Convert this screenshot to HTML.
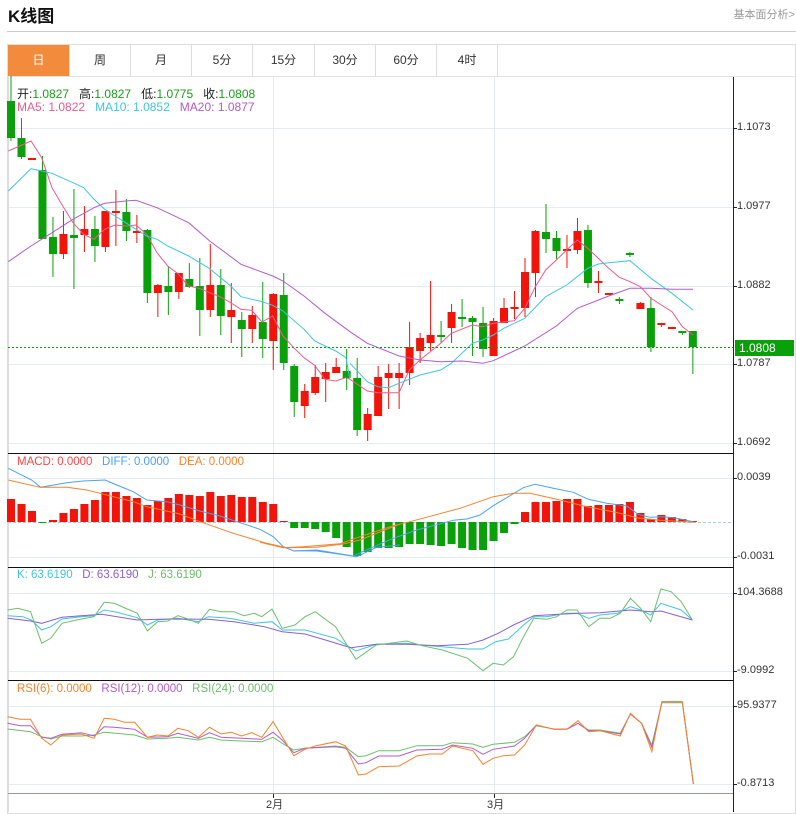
<!DOCTYPE html>
<html><head><meta charset="utf-8">
<style>
*{margin:0;padding:0;box-sizing:border-box}
body{width:796px;height:812px;background:#fff;font-family:"Liberation Sans","Noto Sans CJK SC",sans-serif;position:relative;overflow:hidden}
.t{position:absolute;white-space:nowrap}
#title{left:8px;top:2px;font-size:17px;font-weight:bold;color:#111}
#link{right:1px;top:6px;font-size:11px;color:#999}
#hr{position:absolute;left:7px;top:31px;width:789px;height:1px;background:#ccc}
#box{position:absolute;left:7px;top:44px;width:789px;height:770px;border:1px solid #ddd}
.tab{position:absolute;top:45px;height:31px;border-right:1px solid #ddd;font-size:12px;color:#333;text-align:center;line-height:31px}
#tabline{position:absolute;left:7px;top:76px;width:789px;height:1px;background:#e3e3e3}
svg{position:absolute;left:0;top:0}
.lg{font-size:12px}
</style></head><body>
<div class="t" id="title">K线图</div>
<div class="t" id="link">基本面分析&gt;</div>
<div id="hr"></div>
<div id="box"></div>
<div class="tab" style="left:8px;width:62px;background:#f28c3c;color:#fff">日</div>
<div class="tab" style="left:70px;width:61px">周</div>
<div class="tab" style="left:131px;width:61px">月</div>
<div class="tab" style="left:192px;width:61px">5分</div>
<div class="tab" style="left:253px;width:62px">15分</div>
<div class="tab" style="left:315px;width:61px">30分</div>
<div class="tab" style="left:376px;width:61px">60分</div>
<div class="tab" style="left:437px;width:61px">4时</div>
<div id="tabline"></div>
<svg id="s" width="796" height="812"></svg>
<div class="t lg" style="left:17px;top:85px;color:#222">开:<span style="color:#1a9c1a">1.0827</span>&nbsp;&nbsp; 高:<span style="color:#1a9c1a">1.0827</span>&nbsp;&nbsp; 低:<span style="color:#1a9c1a">1.0775</span>&nbsp;&nbsp; 收:<span style="color:#1a9c1a">1.0808</span></div>
<div class="t lg" style="left:17px;top:100px"><span style="color:#ee5a8c">MA5: 1.0822</span>&nbsp;&nbsp;&nbsp;<span style="color:#3fc6dd">MA10: 1.0852</span>&nbsp;&nbsp;&nbsp;<span style="color:#b25bc9">MA20: 1.0877</span></div>
<div class="t" style="left:17px;top:456px;font-size:11.5px"><span style="color:#f44">MACD: 0.0000</span>&nbsp;&nbsp;&nbsp;<span style="color:#4aa3f0">DIFF: 0.0000</span>&nbsp;&nbsp;&nbsp;<span style="color:#f6822b">DEA: 0.0000</span></div>
<div class="t" style="left:17px;top:569px;font-size:11.5px"><span style="color:#3fc6dd">K: 63.6190</span>&nbsp;&nbsp;&nbsp;<span style="color:#8a5fd0">D: 63.6190</span>&nbsp;&nbsp;&nbsp;<span style="color:#6cbf6c">J: 63.6190</span></div>
<div class="t" style="left:17px;top:683px;font-size:11.5px"><span style="color:#f6822b">RSI(6): 0.0000</span>&nbsp;&nbsp;&nbsp;<span style="color:#b25bc9">RSI(12): 0.0000</span>&nbsp;&nbsp;&nbsp;<span style="color:#6cbf6c">RSI(24): 0.0000</span></div>
<div class="t" style="left:737px;top:121px;font-size:11px;color:#333">1.1073</div>
<div class="t" style="left:737px;top:200px;font-size:11px;color:#333">1.0977</div>
<div class="t" style="left:737px;top:279px;font-size:11px;color:#333">1.0882</div>
<div class="t" style="left:737px;top:357px;font-size:11px;color:#333">1.0787</div>
<div class="t" style="left:737px;top:436px;font-size:11px;color:#333">1.0692</div>
<div class="t" style="left:735px;top:340px;width:59px;height:16px;background:#0aa00a;color:#fff;font-size:12px;line-height:16px;padding-left:4px">1.0808</div>
<div class="t" style="left:737px;top:471px;font-size:11px;color:#333">0.0039</div>
<div class="t" style="left:737px;top:550px;font-size:11px;color:#333">-0.0031</div>
<div class="t" style="left:737px;top:586px;font-size:11px;color:#333">104.3688</div>
<div class="t" style="left:737px;top:664px;font-size:11px;color:#333">-9.0992</div>
<div class="t" style="left:737px;top:699px;font-size:11px;color:#333">95.9377</div>
<div class="t" style="left:737px;top:777px;font-size:11px;color:#333">-0.8713</div>
<div class="t" style="left:266px;top:796px;font-size:11px;color:#333">2月</div>
<div class="t" style="left:487px;top:796px;font-size:11px;color:#333">3月</div>
<script>
var s=document.getElementById('s'),h='';
function L(x1,y1,x2,y2,c,w,d){h+='<line x1="'+x1+'" y1="'+y1+'" x2="'+x2+'" y2="'+y2+'" stroke="'+c+'" stroke-width="'+(w||1)+'"'+(d?' stroke-dasharray="'+d+'"':'')+'/>';}
function R(x,y,w,hh,c){h+='<rect x="'+x+'" y="'+y+'" width="'+w+'" height="'+hh+'" fill="'+c+'"/>';}
function P(a,fx,fy,c){var p=[];for(var i=0;i<a.length;i+=2)p.push((fx(a[i])).toFixed(1)+','+(fy(a[i+1])).toFixed(1));h+='<polyline points="'+p.join(' ')+'" fill="none" stroke="'+c+'" stroke-width="1"/>';}
var g='#e4ecf3';
[128,207,286,364,443,478,557,593,671,706,784].forEach(function(y){L(8,y+.5,733,y+.5,g);});
[273.5,494.5].forEach(function(x){L(x,77,x,794,g);});
L(8.5,77,8.5,812,'#ddd');
var C=[[101,138,76,141,'g'],[138,157,118,159,'g'],[158,159,158,159,'r'],[170,239,156,239,'g'],[237,254,217,277,'g'],[234,254,211,259,'r'],[235,238,189,289,'g'],[229,235,206,252,'r'],[229,246,216,262,'g'],[211,247,211,252,'r'],[211,212,190,246,'r'],[212,231,199,241,'g'],[231,233,215,243,'r'],[230,293,229,303,'g'],[285,293,284,317,'r'],[286,292,266,315,'g'],[273,292,273,299,'r'],[279,287,263,288,'g'],[286,310,258,336,'g'],[285,310,244,317,'r'],[285,316,269,335,'g'],[310,317,283,343,'r'],[320,329,312,357,'g'],[315,329,306,343,'r'],[322,339,282,358,'g'],[294,341,293,370,'r'],[295,363,273,370,'g'],[366,402,364,417,'g'],[391,406,384,418,'r'],[377,393,365,395,'r'],[372,379,363,402,'r'],[367,373,358,373,'r'],[371,378,349,390,'g'],[378,430,358,436,'g'],[414,430,408,441,'r'],[377,416,366,416,'r'],[373,378,364,409,'r'],[373,378,363,409,'r'],[347,373,322,385,'r'],[338,351,333,363,'r'],[335,343,281,351,'r'],[335,337,321,343,'g'],[312,328,304,343,'r'],[317,319,299,327,'g'],[318,322,316,356,'g'],[323,349,307,357,'g'],[321,356,318,356,'r'],[308,323,298,323,'r'],[307,309,291,319,'r'],[272,308,258,317,'r'],[231,273,230,297,'r'],[232,239,204,253,'g'],[238,251,231,259,'g'],[249,251,235,268,'r'],[231,250,218,254,'r'],[230,283,225,288,'g'],[281,283,271,293,'r'],[293,295,293,295,'r'],[299,300,297,304,'g'],[253,254,252,257,'g'],[303,309,302,309,'r'],[308,347,297,352,'g'],[323,325,323,327,'r'],[327,328,327,328,'r'],[331,333,331,335,'g'],[331,347,331,374,'g']];
function cx(i){return 11+i*10.49;}
C.forEach(function(c,i){var x=cx(i),col=c[4]=='g'?'#0aa00a':'#f0140a';L(x,c[2],x,c[3],col,1);R(x-4,c[0],8,Math.max(2,c[1]-c[0]),col);});
var m6x=function(v){return v/3},m6y=function(v){return 76+v/3},m7x=function(v){return 350+v/3},m7y=function(v){return 190+v/3};
P([25,225,93,195,125,245,156,335,188,390,219,440,251,475,282,490,314,460,345,447,377,450,408,447,440,475,471,530,503,570,534,593,566,630,597,637,629,650,660,662,692,680,723,700,755,703,786,738,818,720,849,780,881,815,912,845,944,868,975,910,1007,915,1038,905,1050,910],m6x,m6y,'#ee5a8c');
P([0,568,52,603,84,608,147,608,178,540,210,510,272,460,304,430,367,405,398,410,430,400,493,392,524,355,556,290,587,240,619,210,650,180,682,150,713,175,745,205,776,235,808,262,840,275,871,290,903,325,934,345,966,365,997,410,1029,435],m7x,m7y,'#ee5a8c');
P([25,345,93,278,156,292,219,320,251,335,282,370,314,400,345,420,377,440,440,480,471,490,503,510,566,540,629,578,692,630,723,662,786,677,818,688,849,705,912,760,944,795,975,810,1007,825,1038,845,1050,912],m6x,m6y,'#3fc6dd');
P([0,520,52,575,84,590,115,593,147,580,210,555,272,540,304,520,367,460,398,450,430,435,461,415,524,385,587,320,650,285,713,235,745,222,776,218,840,212,903,265,966,310,1029,360],m7x,m7y,'#3fc6dd');
P([25,557,93,510,156,470,219,430,282,395,314,382,377,375,408,373,471,395,566,440,629,495,723,565,818,600,849,615,912,660,975,712,1050,767],m6x,m6y,'#b25bc9');
P([0,425,52,460,115,485,147,498,210,510,272,515,336,513,398,520,430,512,524,468,619,408,682,355,776,318,840,295,903,295,966,298,1029,298],m7x,m7y,'#b25bc9');
L(8,347.5,733,347.5,'#0a9a0a',1,'2,2');
var M=[499,504,511,523,520,513,509,504,500,492,492,496,498,505,501,498,494,495,496,492,496,495,497,497,502,504,521,528,528,529,532,538,547,556,552,548,548,547,544,544,545,546,544,548,550,550,541,533,524,512,502,502,501,499,499,506,505,505,504,502,513,519,515,517,519,521];
L(8,522.5,733,522.5,'#a8cdea',1,'3,2');
M.forEach(function(y,i){var x=cx(i);if(y<=522)R(x-4,y,8,Math.max(1,522-y),'#f0140a');else R(x-4,522,8,y-522,'#0aa00a');});
var z3x=function(v){return v/3},z3y=function(v){return 440+v/3},z8x=function(v){return 260+v/3},z8y=function(v){return 455+v/3};
P([25,85,95,120,122,142,200,128,250,123,315,120,350,135,400,155,440,180,500,185,540,195,600,213,660,228,720,248,780,268,820,290,850,320,880,332,950,333,1000,340,1070,350,1130,322,1200,315],z3x,z3y,'#4aa3f0');
P([100,288,170,285,280,303,330,280,400,250,470,225,520,212,580,196,620,192,660,180,700,152,740,128,790,98,825,88,880,100,940,112,985,133,1040,145,1100,153,1135,178,1170,187,1210,185,1250,190,1300,200],z8x,z8y,'#4aa3f0');
P([25,120,120,142,200,142,260,150,300,160,400,185,440,200,540,222,600,245,700,280,800,310,860,323,950,322,1030,312,1080,300,1200,252],z3x,z3y,'#f6822b');
P([0,262,70,278,130,275,240,266,300,245,400,212,450,200,600,160,700,125,760,115,810,115,900,135,980,155,1060,170,1130,188,1200,196,1300,202],z8x,z8y,'#f6822b');
var kx=function(v){return v/1.967},ky=function(v){return 565+v/3};
P([15,152,45,155,62,165,82,195,100,185,122,162,160,155,185,152,205,135,230,142,270,158,290,180,310,165,350,160,390,170,410,155,440,158,460,162,500,175,535,170,555,195,600,195,625,205,660,220,700,258,740,238,800,235,830,240,870,245,920,252,950,252,975,230,1000,222,1030,180,1050,155,1075,155,1115,145,1135,145,1158,160,1180,150,1215,145,1240,125,1260,135,1280,150,1300,115,1340,135,1362,165],kx,ky,'#3fc6dd');
P([15,160,60,168,82,175,122,157,160,152,200,148,270,165,310,163,350,162,410,163,460,170,520,185,555,200,600,207,640,225,690,248,740,238,800,238,860,242,920,238,950,225,980,205,1010,180,1050,152,1100,148,1140,145,1180,143,1240,135,1280,140,1300,138,1362,165],kx,ky,'#8a5fd0');
P([15,135,35,130,60,140,82,235,100,220,122,175,150,165,185,155,205,112,225,115,250,132,270,145,290,198,310,170,330,168,350,152,370,162,390,175,412,133,435,140,460,140,480,152,500,145,515,155,535,132,555,190,580,180,600,155,620,140,660,185,700,283,740,240,800,228,830,242,870,255,920,280,950,317,970,295,990,300,1010,275,1030,215,1050,160,1075,163,1095,155,1115,135,1135,135,1158,185,1180,160,1200,160,1220,145,1240,100,1260,130,1280,170,1300,72,1320,80,1340,110,1362,165],kx,ky,'#6cbf6c');
var ry=function(v){return 660+v/3};
P([15,207,60,215,82,230,100,237,122,228,160,228,185,225,205,217,265,225,290,237,330,235,350,232,390,240,412,232,435,240,475,243,515,245,537,232,555,250,578,270,600,265,660,258,680,262,705,290,720,287,745,272,785,272,820,257,870,257,890,248,930,252,950,262,970,253,1012,247,1032,230,1055,197,1090,207,1115,207,1137,190,1158,210,1180,210,1220,220,1240,162,1262,190,1282,255,1302,128,1342,128,1364,372],kx,ry,'#6cbf6c');
P([15,190,40,197,60,197,82,232,100,235,122,223,160,218,185,228,205,200,225,202,265,208,290,232,330,230,350,220,390,235,412,218,435,232,475,235,515,238,537,217,555,240,578,278,600,265,660,260,680,265,705,312,720,308,745,288,785,288,820,270,870,268,890,255,930,265,950,283,970,268,1012,258,1032,235,1055,195,1090,208,1115,208,1137,190,1158,212,1180,212,1220,222,1240,162,1262,190,1282,262,1302,125,1342,125,1364,372],kx,ry,'#b25bc9');
P([15,170,40,178,60,178,82,235,100,255,122,225,160,222,185,235,205,175,225,178,245,187,265,187,290,232,310,225,330,228,350,205,370,212,390,232,412,202,435,222,455,217,475,228,495,218,515,232,537,185,555,230,578,287,600,268,620,258,660,245,680,258,705,345,720,342,745,320,785,318,820,288,845,282,870,282,890,258,930,272,950,313,970,295,990,287,1012,285,1032,255,1055,195,1090,208,1115,208,1137,182,1158,215,1180,212,1220,228,1240,160,1262,190,1282,275,1302,125,1342,125,1364,372],kx,ry,'#f6822b');
[453,567,680].forEach(function(y){L(8,y+.5,733,y+.5,'#111');});
L(8,793.5,733,793.5,'#999');
L(733.5,77,733.5,812,'#222');
[128,207,286,364,443,478,557,593,671,706,784].forEach(function(y){L(733,y+.5,737,y+.5,'#222');});
L(273.5,794,273.5,798,'#222');L(494.5,794,494.5,798,'#222');
s.innerHTML=h;
</script>
</body></html>
